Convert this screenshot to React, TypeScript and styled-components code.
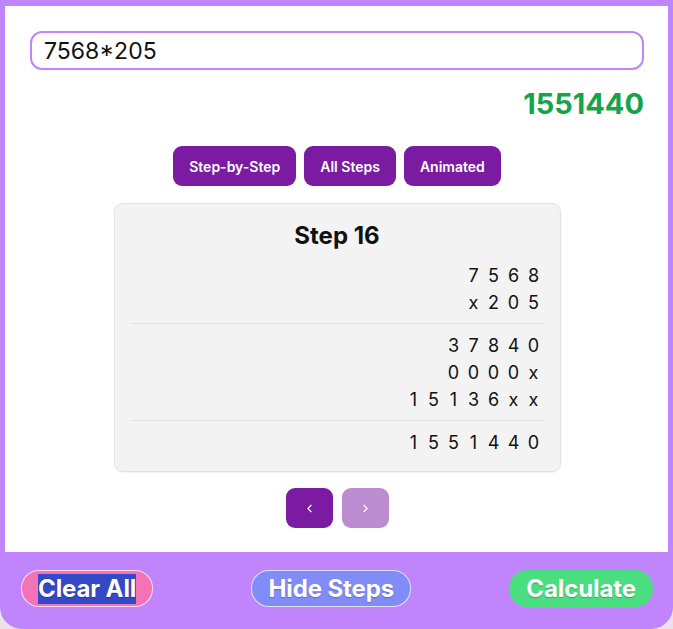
import React from 'react';
import styled, { createGlobalStyle } from 'styled-components';
import { ChevronLeft, ChevronRight } from 'lucide-react';

const GlobalStyle = createGlobalStyle`
  html, body {
    margin: 0;
    padding: 0;
    background: #ebe3ec;
    font-family: Inter, "Noto Sans", sans-serif;
  }
  * { box-sizing: border-box; }
`;

const Shell = styled.div`
  width: 673px;
  height: 629px;
  background: #c084fc;
  border-radius: 0 0 22px 22px;
  padding: 6px 5px 0 5px;
  display: flex;
  flex-direction: column;
`;

const Panel = styled.div`
  background: #ffffff;
  height: 546px;
  padding: 25px 24px 0 25px;
  display: flex;
  flex-direction: column;
  align-items: center;
`;

const ExprInput = styled.input`
  width: 100%;
  height: 39px;
  border: 2px solid #c084fc;
  border-radius: 12px;
  padding: 0 12px;
  font-family: Inter, sans-serif;
  font-size: 23px;
  color: #111;
  outline: none;
  background: #fff;
`;

const Result = styled.div`
  align-self: flex-end;
  margin-top: 16px;
  font-size: 29px;
  font-weight: 700;
  color: #16a34a;
  line-height: 36px;
`;

const ModeRow = styled.div`
  display: flex;
  gap: 8px;
  margin-top: 24px;
`;

const PurpleButton = styled.button<{ $faded?: boolean }>`
  background: #7a1ba2;
  opacity: ${(p) => (p.$faded ? 0.5 : 1)};
  color: #fff;
  border: none;
  border-radius: 9px;
  height: 40px;
  padding: 0 16px;
  font-family: Inter, sans-serif;
  font-size: 14px;
  font-weight: 600;
  cursor: pointer;
`;

const StepCard = styled.div`
  width: 447px;
  margin-top: 17px;
  background: #f3f3f3;
  border: 1px solid #e3e3e3;
  border-radius: 9px;
  box-shadow: 0 1px 2px rgba(0, 0, 0, 0.06);
  padding: 16px 16px 12px;
  display: flex;
  flex-direction: column;
`;

const StepTitle = styled.div`
  text-align: center;
  font-size: 24px;
  font-weight: 700;
  color: #111;
  line-height: 32px;
  margin-bottom: 6px;
`;

const Block = styled.div`
  display: flex;
  flex-direction: column;
  align-items: flex-end;
  padding: 4px 0 3px;
`;

const Divider = styled.div`
  height: 1px;
  background: #e0e0e0;
  margin: 4px 0;
`;

const DigitRow = styled.div`
  display: flex;
  height: 27px;
  align-items: center;
`;

const Cell = styled.span`
  width: 20px;
  text-align: center;
  font-size: 18px;
  color: #111;
`;

const NavRow = styled.div`
  display: flex;
  gap: 9px;
  margin-top: 16px;
`;

const NavButton = styled(PurpleButton)`
  width: 47px;
  padding: 0;
  display: flex;
  align-items: center;
  justify-content: center;
`;

const Footer = styled.div`
  flex: 1;
  display: flex;
  justify-content: space-between;
  align-items: flex-start;
  padding: 18px 15px 0 16px;
`;

const ActionButton = styled.button<{ $bg: string; $border?: boolean }>`
  background: ${(p) => p.$bg};
  border: 1px solid ${(p) => (p.$border ? 'rgba(255,255,255,0.75)' : 'transparent')};
  border-radius: 18px;
  height: 37px;
  padding: 0 16px;
  color: #fff;
  font-family: Inter, sans-serif;
  font-size: 24px;
  font-weight: 700;
  letter-spacing: -0.1px;
  text-shadow: 0 1px 1px rgba(0, 0, 0, 0.25);
  cursor: pointer;
  display: flex;
  align-items: center;
`;

const Selected = styled.span`
  background: #3349c6;
  padding: 1px 0;
  line-height: 28px;
`;

const multiplicand = ['7', '5', '6', '8'];
const multiplier = ['x', '2', '0', '5'];
const partials = [
  ['3', '7', '8', '4', '0'],
  ['0', '0', '0', '0', 'x'],
  ['1', '5', '1', '3', '6', 'x', 'x'],
];
const total = ['1', '5', '5', '1', '4', '4', '0'];

const Digits: React.FC<{ cells: string[] }> = ({ cells }) => (
  <DigitRow>
    {cells.map((c, i) => (
      <Cell key={i}>{c}</Cell>
    ))}
  </DigitRow>
);

export default function App() {
  return (
    <>
      <GlobalStyle />
      <Shell>
        <Panel>
          <ExprInput defaultValue="7568*205" />
          <Result>1551440</Result>
          <ModeRow>
            <PurpleButton>Step-by-Step</PurpleButton>
            <PurpleButton>All Steps</PurpleButton>
            <PurpleButton>Animated</PurpleButton>
          </ModeRow>
          <StepCard>
            <StepTitle>Step 16</StepTitle>
            <Block>
              <Digits cells={multiplicand} />
              <Digits cells={multiplier} />
            </Block>
            <Divider />
            <Block>
              {partials.map((row, i) => (
                <Digits key={i} cells={row} />
              ))}
            </Block>
            <Divider />
            <Block>
              <Digits cells={total} />
            </Block>
          </StepCard>
          <NavRow>
            <NavButton>
              <ChevronLeft size={13} strokeWidth={2} />
            </NavButton>
            <NavButton $faded>
              <ChevronRight size={13} strokeWidth={2} />
            </NavButton>
          </NavRow>
        </Panel>
        <Footer>
          <ActionButton $bg="#f472b6" $border>
            <Selected>Clear All</Selected>
          </ActionButton>
          <ActionButton $bg="#818cf8" $border>
            Hide Steps
          </ActionButton>
          <ActionButton $bg="#4ade80">Calculate</ActionButton>
        </Footer>
      </Shell>
    </>
  );
}
